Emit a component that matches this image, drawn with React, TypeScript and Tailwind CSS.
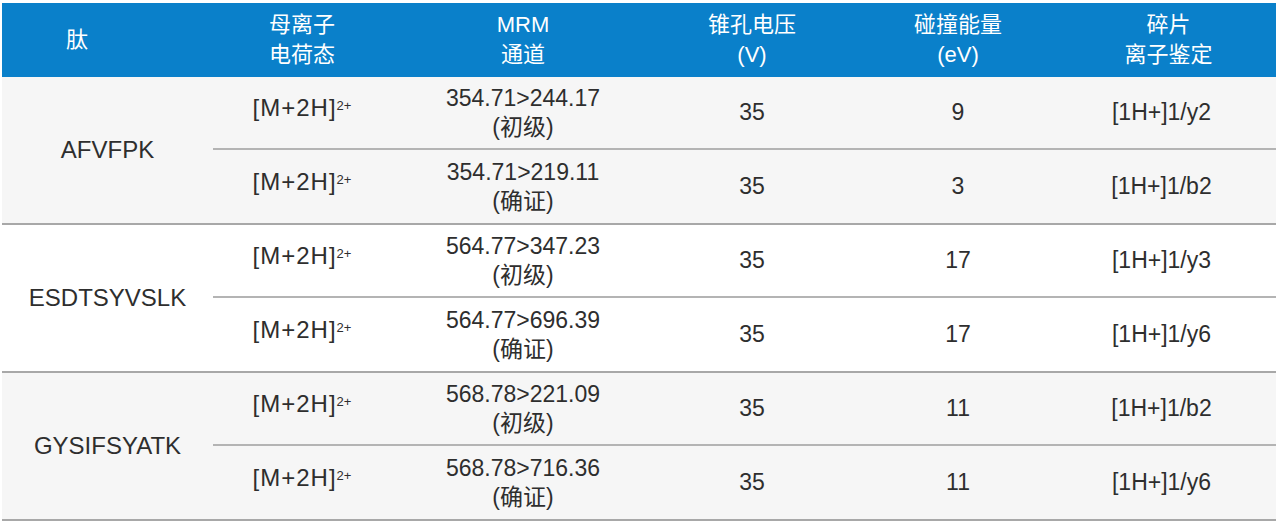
import React from "react";

type Row = { charge: string; mrm: string; kind: string; cv: string; ce: string; frag: string };
type Group = { peptide: string; bg: string; rows: Row[] };

const groups: Group[] = [
  {
    peptide: "AFVFPK",
    bg: "bg-[#f6f6f6]",
    rows: [
      { charge: "[M+2H]", mrm: "354.71>244.17", kind: "(初级)", cv: "35", ce: "9", frag: "[1H+]1/y2" },
      { charge: "[M+2H]", mrm: "354.71>219.11", kind: "(确证)", cv: "35", ce: "3", frag: "[1H+]1/b2" },
    ],
  },
  {
    peptide: "ESDTSYVSLK",
    bg: "bg-white",
    rows: [
      { charge: "[M+2H]", mrm: "564.77>347.23", kind: "(初级)", cv: "35", ce: "17", frag: "[1H+]1/y3" },
      { charge: "[M+2H]", mrm: "564.77>696.39", kind: "(确证)", cv: "35", ce: "17", frag: "[1H+]1/y6" },
    ],
  },
  {
    peptide: "GYSIFSYATK",
    bg: "bg-[#f6f6f6]",
    rows: [
      { charge: "[M+2H]", mrm: "568.78>221.09", kind: "(初级)", cv: "35", ce: "11", frag: "[1H+]1/b2" },
      { charge: "[M+2H]", mrm: "568.78>716.36", kind: "(确证)", cv: "35", ce: "11", frag: "[1H+]1/y6" },
    ],
  },
];

const font = { fontFamily: '"Liberation Sans", "Noto Sans CJK SC", sans-serif' };

function DataRow({ row, last }: { row: Row; last: boolean }) {
  return (
    <div className={`flex h-[73px] items-center ${last ? "" : "border-b-2 border-[#b4b4b4]"}`}>
      <div className="flex w-[178px] justify-center pb-[10px]">
        <span className="text-[24px] tracking-[1px]">
          {row.charge}
          <sup className="relative -top-[6px] text-[13px] tracking-normal">2+</sup>
        </span>
      </div>
      <div className="flex w-[264px] flex-col items-center leading-[29px]">
        <span>{row.mrm}</span>
        <span>{row.kind}</span>
      </div>
      <div className="w-[194px] text-center">{row.cv}</div>
      <div className="w-[218px] text-center">{row.ce}</div>
      <div className="flex-1 pr-[20px] text-center">{row.frag}</div>
    </div>
  );
}

export default function App() {
  return (
    <div className="h-[526px] w-[1280px] bg-white pl-[2px] pr-[4px] pt-[3px]" style={font}>
      <div className="flex h-[74px] items-center bg-[#0a80ca] text-[22px] leading-[30px] text-white">
        <div className="w-[211px] pl-[64px]">肽</div>
        <div className="w-[178px] text-center">
          母离子
          <br />
          电荷态
        </div>
        <div className="w-[264px] text-center">
          MRM
          <br />
          通道
        </div>
        <div className="w-[194px] text-center">
          锥孔电压
          <br />
          (V)
        </div>
        <div className="w-[218px] text-center">
          碰撞能量
          <br />
          (eV)
        </div>
        <div className="flex-1 pr-[6px] text-center">
          碎片
          <br />
          离子鉴定
        </div>
      </div>
      {groups.map((g) => (
        <div
          key={g.peptide}
          className={`flex border-b-2 border-[#a8a8a8] text-[23px] text-[#2e2e2e] ${g.bg}`}
        >
          <div className="flex w-[211px] items-center justify-center text-[24px]">{g.peptide}</div>
          <div className="flex-1">
            {g.rows.map((r, i) => (
              <DataRow key={i} row={r} last={i === g.rows.length - 1} />
            ))}
          </div>
        </div>
      ))}
    </div>
  );
}
